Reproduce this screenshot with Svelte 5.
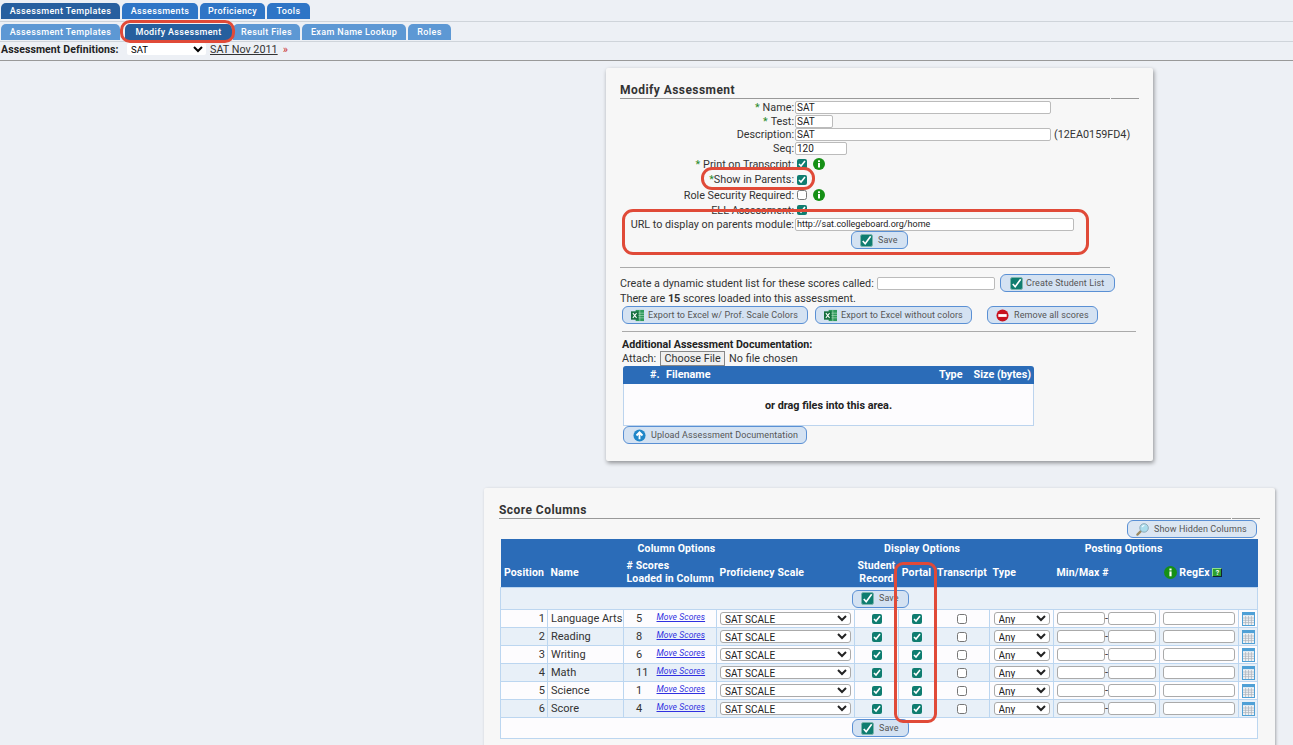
<script>
  const top = ['Assessment Templates', 'Assessments', 'Proficiency', 'Tools'];
  const sub = ['Assessment Templates', 'Modify Assessment', 'Result Files', 'Exam Name Lookup', 'Roles'];
  const rows = [
    [1, 'Language Arts', 5], [2, 'Reading', 8], [3, 'Writing', 6],
    [4, 'Math', 11], [5, 'Science', 1], [6, 'Score', 4]
  ];
</script>

{#snippet check()}
  <svg class="ic" viewBox="0 0 14 14"><rect x="0.5" y="0.5" width="13" height="13" rx="2" fill="#0f7d70" stroke="#7fb8ae"/><path d="M3 7.5l2.6 3L11.5 2.5" fill="none" stroke="#fff" stroke-width="1.8"/></svg>
{/snippet}
{#snippet excel()}
  <svg class="ic" viewBox="0 0 14 14"><rect x="5" y="1" width="9" height="12" fill="#2f9a5b"/><path d="M5 4.5h9M5 7h9M5 9.5h9M9.5 1v12" stroke="#bfe3cc" stroke-width=".6"/><rect x="0" y="2.5" width="8" height="9" fill="#17703f"/><path d="M2 4.5l4 5M6 4.5l-4 5" stroke="#fff" stroke-width="1.1"/></svg>
{/snippet}
{#snippet stop()}
  <svg class="ic" viewBox="0 0 14 14"><circle cx="7" cy="7" r="6.5" fill="#c8121f"/><rect x="2.5" y="5.5" width="9" height="3" fill="#fff"/></svg>
{/snippet}
{#snippet up()}
  <svg class="ic" viewBox="0 0 14 14"><circle cx="7" cy="7" r="6.5" fill="#1f86c8"/><path d="M7 11V4M3.8 7L7 3.6 10.2 7" fill="none" stroke="#fff" stroke-width="2"/></svg>
{/snippet}
{#snippet lens()}
  <svg class="ic" viewBox="0 0 14 14"><path d="M5.5 8.5L1.5 12.5" stroke="#9a8a62" stroke-width="2.4" stroke-linecap="round"/><circle cx="8.7" cy="5.3" r="4.6" fill="#a9dcec" stroke="#8aa6b4" stroke-width="1"/><path d="M6.5 4.5a3 3 0 0 1 2.5-2" fill="none" stroke="#f2fbff" stroke-width="1.2"/></svg>
{/snippet}
{#snippet info()}
  <svg class="info" viewBox="0 0 12 12"><circle cx="6" cy="6" r="6" fill="#169016"/><rect x="5" y="5" width="2" height="4.5" fill="#fff"/><rect x="5" y="2.3" width="2" height="1.8" fill="#fff"/></svg>
{/snippet}
{#snippet cal()}
  <svg class="cal" viewBox="0 0 13 14"><rect x=".5" y=".5" width="12" height="13" fill="#eef2f5" stroke="#4fa0d6"/><rect x=".5" y=".5" width="12" height="2.6" fill="#4fa0d6"/><path d="M1 6h11M1 8.3h11M1 10.6h11M3.6 4v9M6.5 4v9M9.4 4v9" stroke="#aab2ba" stroke-width=".7"/></svg>
{/snippet}
{#snippet btn(icon, label, cls = '')}
  <span class="btn {cls}">{@render icon()}<span>{label}</span></span>
{/snippet}

<div class="page">
  <nav class="tabs t1">
    {#each top as t, i}<span class="tab" class:active={i === 0}>{t}</span>{/each}
  </nav>
  <nav class="tabs t2">
    {#each sub as t, i}<span class="tab" class:active={i === 1}>{t}</span>{/each}
  </nav>
  <div class="defs">
    <b>Assessment Definitions:</b>
    <select class="defsel"><option>SAT</option></select>
    <a href="#top">SAT Nov 2011</a>
    <span class="more">»</span>
  </div>

  <main>
    <section class="card c1">
      <div class="title"><h2>Modify Assessment</h2><i></i></div>
      <div class="form">
        <label class="r14"><em>*</em> Name:</label><div class="r14"><input class="w256" value="SAT" /></div>
        <label class="r14"><em>*</em> Test:</label><div class="r14"><input class="w38" value="SAT" /></div>
        <label class="r13">Description:</label><div class="r13"><input class="w256" value="SAT" /><span class="code">(12EA0159FD4)</span></div>
        <label class="r14">Seq:</label><div class="r14"><input class="w52" value="120" /></div>
        <label class="r16 pt"><em>*</em> Print on Transcript:</label><div class="r16 pt"><input type="checkbox" checked />{@render info()}</div>
        <label class="r15"><em>*</em>Show in Parents:</label><div class="r15"><input type="checkbox" checked /></div>
        <label class="r16">Role Security Required:</label><div class="r16"><input type="checkbox" />{@render info()}</div>
        <label class="r14">ELL Assessment:</label><div class="r14"><input type="checkbox" checked /></div>
        <label class="r14">URL to display on parents module:</label><div class="r14"><input class="w279 small" value="http://sat.collegeboard.org/home" /></div>
        <div class="savecell">{@render btn(check, 'Save', 'save')}</div>
      </div>
      <hr class="h1" />
      <div class="dyn">
        <span>Create a dynamic student list for these scores called:</span>
        <input class="w118" />
        {@render btn(check, 'Create Student List', 'create')}
      </div>
      <p class="count">There are <b>15</b> scores loaded into this assessment.</p>
      <div class="exports">
        {@render btn(excel, 'Export to Excel w/ Prof. Scale Colors', 'e1')}
        {@render btn(excel, 'Export to Excel without colors', 'e2')}
        {@render btn(stop, 'Remove all scores', 'e3')}
      </div>
      <hr class="h2" />
      <div class="docs">
        <b>Additional Assessment Documentation:</b>
        <div class="attach">Attach: <span class="file">Choose File</span> No file chosen</div>
        <div class="ftable">
          <div class="fhead"><span class="fnum">#.</span><span class="fname">Filename</span><span class="ftype">Type</span><span>Size (bytes)</span></div>
          <div class="fbody">or drag files into this area.</div>
        </div>
        {@render btn(up, 'Upload Assessment Documentation', 'upload')}
      </div>
    </section>

    <section class="card c2">
      <div class="title"><h2>Score Columns</h2><i></i></div>
      <div class="hidden-row">{@render btn(lens, 'Show Hidden Columns', 'hiddenbtn')}</div>
      <table>
        <colgroup>
          <col class="c-pos" /><col class="c-name" /><col class="c-n" /><col class="c-move" /><col class="c-prof" />
          <col class="c-stu" /><col class="c-por" /><col class="c-tra" /><col class="c-typ" /><col class="c-min" /><col class="c-reg" /><col class="c-cal" />
        </colgroup>
        <thead>
          <tr class="h-a">
            <th colspan="5" class="co">Column Options</th>
            <th colspan="3" class="dis">Display Options</th>
            <th colspan="4" class="pos">Posting Options</th>
          </tr>
          <tr class="h-b">
            <th>Position</th><th class="l">Name</th><th colspan="2" class="l">#&nbsp;Scores<br />Loaded in Column</th>
            <th class="l">Proficiency Scale</th><th class="rt">Student<br />Record</th><th>Portal</th><th>Transcript</th>
            <th class="l">Type</th><th class="mm">Min/Max #</th><th colspan="2" class="rg">{@render info()} RegEx <span class="q">?</span></th>
          </tr>
        </thead>
        <tbody>
          <tr class="saverow alt"><td colspan="12"><div class="tsave">{@render btn(check, 'Save', 'save')}</div></td></tr>
          {#each rows as r, i}
            <tr class:alt={i % 2 === 1}>
              <td class="num">{r[0]}</td>
              <td class="txt">{r[1]}</td>
              <td class="cnt">{r[2]}</td>
              <td class="mv"><a href="#top">Move Scores</a></td>
              <td class="ctr"><select class="prof"><option>SAT SCALE</option></select></td>
              <td class="ctr"><input type="checkbox" checked /></td>
              <td class="ctr"><input type="checkbox" checked /></td>
              <td class="ctr"><input type="checkbox" /></td>
              <td class="ctr"><select class="any"><option>Any</option></select></td>
              <td class="ctr mmcell"><input class="mmi" />-<input class="mmi" /></td>
              <td class="ctr"><input class="rx" /></td>
              <td class="ctr calc">{@render cal()}</td>
            </tr>
          {/each}
          <tr class="saverow"><td colspan="12"><div class="tsave">{@render btn(check, 'Save', 'save')}</div></td></tr>
        </tbody>
      </table>
    </section>
  </main>

  <div class="mark m-tab"></div>
  <div class="mark m-show"></div>
  <div class="mark m-url"></div>
  <div class="mark m-portal"></div>
</div>

<style>
  :global(body) { margin: 0; background: #edf0f5; }
  .page {
    position: relative; height: 745px; overflow: hidden;
    font: 10.8px/13px Roboto, "Liberation Sans", sans-serif; color: #333;
  }
  .tabs { display: flex; gap: 2px; padding-left: 1px; border-bottom: 1px solid #cfd4da; align-items: flex-start; }
  .t1 { height: 18px; padding-top: 3px; }
  .t2 { height: 17px; padding-top: 2px; }
  .tab {
    display: flex; align-items: center; justify-content: center; height: 16px;
    border-radius: 5px 5px 0 0; color: #fff; font-size: 9px; font-weight: 500; letter-spacing: .35px;
    background: #2e75c6;
  }
  .t1 .tab:nth-child(1) { width: 119px; } .t1 .tab:nth-child(2) { width: 76px; }
  .t1 .tab:nth-child(3) { width: 65px; } .t1 .tab:nth-child(4) { width: 43px; }
  .t1 .tab.active { background: #275f9f; }
  .t2 .tab { background: #5d98d4; }
  .t2 .tab:nth-child(1) { width: 119px; margin-right: 3px; } .t2 .tab:nth-child(2) { width: 107px; margin-right: -1px; }
  .t2 .tab:nth-child(3) { width: 67px; } .t2 .tab:nth-child(4) { width: 104px; } .t2 .tab:nth-child(5) { width: 43px; }
  .t2 .tab.active { background: #265f9e; }

  .defs {
    display: flex; align-items: center; padding: 0 0 4px 1px; box-sizing: border-box;
    border-bottom: 1px solid #999; height: 19px; color: #222;
  }
  .defs b { font-size: 10.5px; width: 126px; flex: none; letter-spacing: .1px; }
  .defsel { width: 79px; height: 12px; font: 9.5px Roboto, sans-serif; padding: 0; border: 0; background: #fff; border-radius: 2px; }
  .defs a { color: #333; font-size: 10.8px; margin: 0 5px 0 4px; }
  .more { color: #c33; font-size: 11px; }

  main { padding-left: 466px; padding-top: 7px; display: flex; flex-direction: column; align-items: center; }
  .card { background: #f7f7f7; box-sizing: border-box; box-shadow: 1px 2px 4px rgba(0, 0, 0, .4); border-radius: 2px; flex: none; }
  .c1 { width: 547px; height: 393px; padding: 15px 14px 0; margin-bottom: 27px; }
  .c2 { width: 791px; height: 280px; padding: 15px 15px 0; box-shadow: 1px 1px 3px rgba(0,0,0,.3); }

  .title { display: flex; gap: 1px; }
  .title h2 { flex: 1; margin: 0; font-size: 12px; line-height: 15px; font-weight: 700; color: #333; border-bottom: 1px solid #999; letter-spacing: .45px; }
  .title i { width: 28px; border-bottom: 1px solid #999; }

  .form { display: grid; grid-template-columns: 174px 1fr; margin-top: 1px; }
  .form label { text-align: right; display: flex; justify-content: flex-end; align-items: center; white-space: nowrap; color: #333; }
  .form em { color: #2a8a2a; font-style: normal; margin-right: 3px; }
  .form label:nth-of-type(6) em { margin-right: 0; }
  .form > div { display: flex; align-items: center; padding-left: 1px; }
  .form input[type=checkbox] { margin-left: 2px; }
  .r13 { height: 13px; } .r14 { height: 14px; } .r15 { height: 15px; } .r16 { height: 16px; }
  .pt { margin-top: 1px; }
  input:not([type]) { box-sizing: border-box; height: 13px; border: 1px solid #bbb; border-radius: 2px; background: #fff; padding: 0 1px; font: 10px Roboto, sans-serif; color: #222; margin: 0; }
  .w256 { width: 256px; } .w38 { width: 38px; } .w52 { width: 52px; } .w279 { width: 279px; } .w118 { width: 118px; }
  .small { font-size: 9px !important; }
  .code { margin-left: 3px; }
  input[type=checkbox] { width: 10px; height: 10px; margin: 0; accent-color: #0f7d70; }
  .info { width: 12px; height: 12px; margin-left: 6px; flex: none; }
  .savecell { grid-column: 1 / 3; justify-content: center; padding: 0 !important; height: 18px; }

  .btn {
    display: inline-flex; align-items: center; box-sizing: border-box; height: 18px;
    border: 1px solid #5a90d4; border-radius: 6px; background: #d4e2f2; color: #555;
    font-size: 9px; letter-spacing: .1px; white-space: nowrap; padding-left: 8px; flex: none;
  }
  .ic { width: 13px; height: 13px; margin-right: 5px; flex: none; }
  .save { width: 57px; }
  .create { width: 115px; margin-left: 5px; padding-left: 9px; }
  .create .ic { margin-right: 3px; }
  .e1 { width: 186px; margin-left: 2px; } .e2 { width: 157px; margin-left: 7px; } .e3 { width: 111px; margin-left: 15px; }
  .e1 .ic, .e2 .ic { margin-right: 4px; }
  .upload { width: 184px; margin-left: 1px; padding-left: 9px; }
  .hiddenbtn { width: 130px; padding-left: 8px; background: #dbe6f2; }

  hr { border: 0; border-top: 1px solid #aaa; margin: 0; }
  .h1 { width: 490px; margin-top: 18px; }
  .dyn { display: flex; align-items: center; margin-top: 6px; height: 18px; }
  .dyn > span:first-child { width: 257px; flex: none; }
  .count { margin: 0; height: 14px; line-height: 14px; }
  .exports { display: flex; }
  .h2 { margin: 7px 3px 0 2px; }
  .docs { margin: 6px 0 0 2px; }
  .docs > b { display: block; height: 13px; line-height: 13px; font-size: 10.7px; color: #222; }
  .attach { height: 15px; display: flex; align-items: center; gap: 4px; color: #333; }
  .file { background: #efefef; border: 1px solid #888; box-sizing: border-box; width: 65px; height: 15px; line-height: 13px; text-align: center; }
  .ftable { width: 411px; margin-left: 1px; }
  .fhead { background: #2b6cb8; color: #fff; height: 18px; padding-bottom: 1px; box-sizing: border-box; display: flex; align-items: center; font-weight: 700; font-size: 10.8px; border-radius: 3px 3px 0 0; }
  .fnum { margin-left: 27px; width: 16px; } .fname { flex: 1; } .ftype { margin-right: 11px; }
  .fhead span:last-child { margin-right: 3px; }
  .fbody { height: 42px; padding-top: 1px; box-sizing: border-box; border: 1px solid #bcd4ee; border-top: 0; background: #fdfcfe; display: flex; align-items: center; justify-content: center; font-weight: 700; font-size: 10.8px; color: #222; }

  .hidden-row { display: flex; justify-content: flex-end; margin-top: 1px; height: 19px; margin-right: 3px; }
  table { border-collapse: collapse; table-layout: fixed; width: 757px; margin-left: 1px; }
  .c-pos { width: 47px; } .c-name { width: 76px; } .c-n { width: 32px; } .c-move { width: 61px; } .c-prof { width: 138px; }
  .c-stu { width: 44px; } .c-por { width: 36px; } .c-tra { width: 55px; } .c-typ { width: 64px; } .c-min { width: 106px; } .c-reg { width: 79px; } .c-cal { width: 19px; }
  th { background: #2b6cb8; color: #fff; font-size: 10.5px; line-height: 13px; font-weight: 700; padding: 0; white-space: nowrap; letter-spacing: .15px; }
  .h-a th { height: 18px; }
  .h-b th { height: 30px; }
  th.l { text-align: left; padding-left: 3px; }
  .co { padding-right: 2px; }
  th.rt { text-align: center; }
  th.mm { text-align: left; padding-left: 3px; }
  th.rg { text-align: left; padding-left: 4px; }
  th.rg .info { margin: 0; width: 13px; height: 13px; vertical-align: -3px; }
  th.dis { text-align: center; }
  .q { display: inline-block; width: 10px; height: 9px; line-height: 8px; text-align: center; font-size: 7px; background: #2fa02f; border: 1px solid #8fe08f; border-right-color: #123; border-bottom-color: #123; box-sizing: border-box; vertical-align: 1px; }
  td { padding: 0; border: 1px solid #bcd6f0; background: #fdfcfe; height: 18px; box-sizing: border-box; white-space: nowrap; font-size: 11px; }
  .alt td { background: #e8f0f8; }
  .saverow td { height: 22px; }
  .tsave { display: flex; padding-left: 351px; }
  .saverow:last-child td { height: 21px; }
  .num { text-align: right; padding-right: 2px; }
  .txt { padding-left: 3px; }
  .cnt { text-align: left; padding-left: 12px; border-right: 0; }
  .mv { border-left: 0; padding-left: 1px; }
  .mv a { color: #3030e0; font-style: italic; font-size: 8.5px; position: relative; top: -2px; letter-spacing: .1px; }
  .ctr { text-align: center; }
  .ctr input[type=checkbox] { vertical-align: middle; }
  select.prof { width: 131px; height: 13px; }
  select.any { width: 56px; height: 13px; }
  select.prof, select.any { box-sizing: border-box; border: 1px solid #aaa; border-radius: 3px; background: #fff; font: 10px Roboto, sans-serif; padding: 0; vertical-align: middle; color: #222; }
  .mmi { width: 48px !important; border-radius: 3px !important; border-color: #aaa !important; vertical-align: middle; }
  .rx { width: 72px !important; border-radius: 3px !important; border-color: #aaa !important; vertical-align: middle; }
  .cal { width: 13px; height: 14px; vertical-align: middle; }

  .mark { position: absolute; border: 3.5px solid #e04a38; box-sizing: border-box; pointer-events: none; }
  .m-tab { left: 120px; top: 20px; width: 115px; height: 23px; border-radius: 10px; }
  .m-show { left: 701px; top: 167px; width: 114px; height: 23px; border-radius: 11px; }
  .m-url { left: 622px; top: 209px; width: 467px; height: 46px; border-radius: 11px; }
  .m-portal { left: 894px; top: 562px; width: 43px; height: 161px; border-radius: 9px; }
</style>
